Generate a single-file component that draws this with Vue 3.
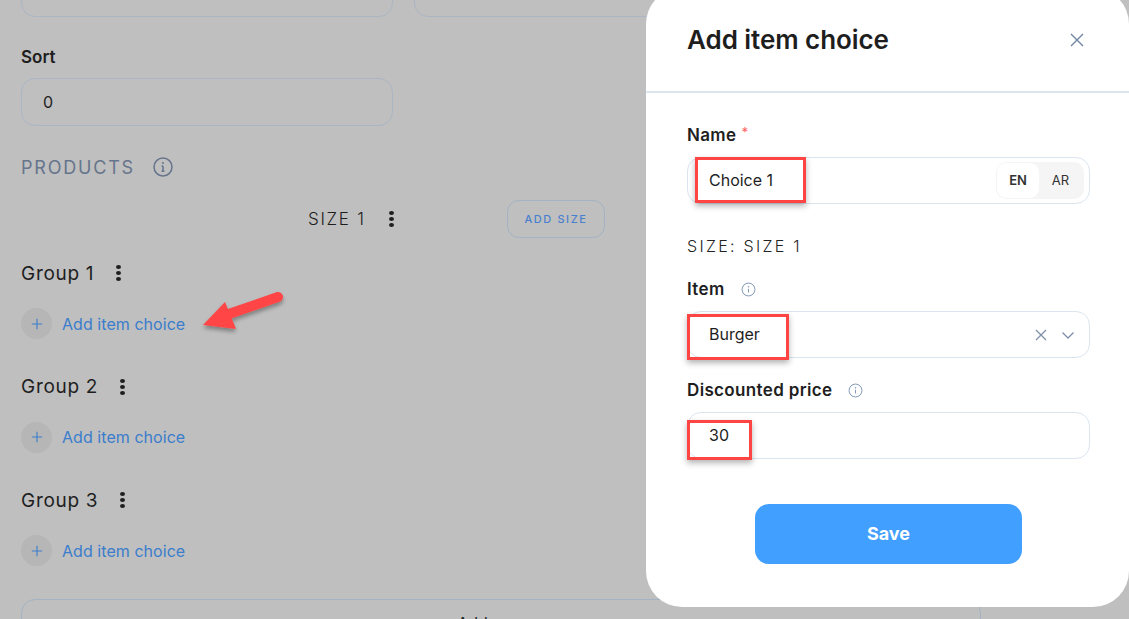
<script setup>
const groups = ['Group 1', 'Group 2', 'Group 3']
</script>

<template>
  <div class="page">
    <main class="content">
      <div class="top-row">
        <div class="field-box"></div>
        <div class="field-box"></div>
      </div>
      <div class="sort-label">Sort</div>
      <div class="field-box sort-input">0</div>
      <div class="products">
        <span>PRODUCTS</span>
        <svg class="info-lg" viewBox="0 0 20 20"><circle cx="10" cy="10" r="9" /><path d="M10 9v5.2M8.6 9h1.4M8.6 14.2h2.8" /><circle class="dot" cx="10" cy="6" r="1" /></svg>
      </div>
      <div class="size-row">
        <span class="size-name">SIZE 1</span>
        <span class="kebab"><i></i><i></i><i></i></span>
        <button class="add-size">ADD SIZE</button>
      </div>
      <section v-for="g in groups" :key="g" class="group">
        <div class="group-title">
          <span>{{ g }}</span>
          <span class="kebab"><i></i><i></i><i></i></span>
        </div>
        <div class="add-choice">
          <span class="plus"><svg viewBox="0 0 14 14"><path d="M7 1v12M1 7h12" /></svg></span>
          <span>Add item choice</span>
        </div>
      </section>
      <div class="add-group">Add group</div>
    </main>

    <aside class="modal">
      <header class="modal-head">
        <h2>Add item choice</h2>
        <svg class="close" viewBox="0 0 14 14"><path d="M1 1l12 12M13 1L1 13" /></svg>
      </header>
      <div class="modal-body">
        <label class="lbl">Name <em>*</em></label>
        <div class="input name-input">
          <span>Choice 1</span>
          <div class="lang"><b>EN</b><span>AR</span></div>
        </div>
        <div class="size-line">SIZE: SIZE 1</div>
        <label class="lbl item-lbl">Item
          <svg class="info" viewBox="0 0 20 20"><circle cx="10" cy="10" r="8.6" /><path d="M10 9v5" /><circle class="dot" cx="10" cy="6.2" r="1" /></svg>
        </label>
        <div class="input">
          <span>Burger</span>
          <div class="sel-icons">
            <svg viewBox="0 0 14 14"><path d="M2 2l10 10M12 2L2 12" /></svg>
            <svg viewBox="0 0 14 14"><path d="M1.5 4.5L7 10l5.5-5.5" /></svg>
          </div>
        </div>
        <label class="lbl price-lbl">Discounted price
          <svg class="info" viewBox="0 0 20 20"><circle cx="10" cy="10" r="8.6" /><path d="M10 9v5" /><circle class="dot" cx="10" cy="6.2" r="1" /></svg>
        </label>
        <div class="input"><span>30</span></div>
        <button class="save">Save</button>
      </div>
    </aside>

    <div class="mark mark-name"></div>
    <div class="mark mark-item"></div>
    <div class="mark mark-price"></div>
    <svg class="arrow" viewBox="0 0 100 50">
      <defs>
        <filter id="arrow-shadow" x="-20%" y="-20%" width="140%" height="160%">
          <feDropShadow dx="0" dy="3" stdDeviation="2" flood-color="#000" flood-opacity="0.35" />
        </filter>
      </defs>
      <g filter="url(#arrow-shadow)">
        <path d="M83 7L28 26" stroke="#ff4444" stroke-width="10" stroke-linecap="round" fill="none" />
        <path d="M8 35L30 12L41 39Z" fill="#ff4444" />
      </g>
    </svg>
  </div>
</template>

<style>
html, body { margin: 0; background: #bfbfbf; }
</style>

<style scoped>
.page {
  position: relative;
  width: 1129px;
  height: 619px;
  overflow: hidden;
  background: #bfbfbf;
  font-family: Inter, "Liberation Sans", sans-serif;
  color: #1e1e1e;
}
.content { padding-left: 21px; width: 960px; }
.top-row { display: flex; gap: 21px; margin-top: -30px; }
.field-box {
  box-sizing: border-box;
  width: 372px;
  height: 47px;
  border: 1px solid #aab6c4;
  border-radius: 14px;
  display: flex;
  align-items: center;
  padding-left: 21px;
  font-size: 16px;
}
.sort-label { margin-top: 29px; font-size: 17px; font-weight: 600; line-height: 22px; }
.sort-input { margin-top: 10px; height: 48px; }
.products {
  display: flex;
  align-items: center;
  gap: 18px;
  margin-top: 29px;
  height: 24px;
  font-size: 18px;
  letter-spacing: 1.8px;
  color: #66758c;
}
.info-lg { width: 20px; height: 20px; fill: none; stroke: #66758c; stroke-width: 1.5; }
.dot { fill: currentColor; stroke: none; }
.info-lg .dot { fill: #66758c; }
.size-row {
  display: flex;
  align-items: center;
  height: 38px;
  margin-top: 21px;
  padding-left: 287px;
}
.size-name { width: 58px; font-size: 17px; font-weight: 300; letter-spacing: 1.7px; white-space: nowrap; }
.size-row .kebab { margin-left: 23px; }
.add-size {
  box-sizing: border-box;
  margin-left: 113px;
  width: 98px;
  height: 38px;
  background: transparent;
  border: 1px solid #a3b2c4;
  border-radius: 12px;
  color: #4a7fce;
  font: 500 11px Inter, sans-serif;
  letter-spacing: 1.6px;
  padding: 0;
}
.kebab { display: inline-flex; flex-direction: column; gap: 2px; width: 5px; }
.kebab i { width: 5px; height: 4px; border-radius: 50%; background: #1e1e1e; }
.group { height: 113.5px; }
.group:first-of-type { margin-top: 22px; }
.group-title {
  display: flex;
  align-items: center;
  gap: 22px;
  height: 26px;
  font-size: 19px;
  letter-spacing: 0.7px;
}
.add-choice {
  display: flex;
  align-items: center;
  gap: 10px;
  margin-top: 22px;
  height: 31px;
  font-size: 16px;
  letter-spacing: 0.05px;
  color: #3a7dcc;
}
.plus {
  width: 31px;
  height: 31px;
  border-radius: 50%;
  background: #b6b6b6;
  display: flex;
  align-items: center;
  justify-content: center;
}
.plus svg { width: 12px; height: 12px; fill: none; stroke: #3a7dcc; stroke-width: 1.3; }
.add-group {
  box-sizing: border-box;
  height: 60px;
  margin-top: -2px;
  border: 1px solid #a3b2c4;
  border-radius: 14px;
  text-align: center;
  padding-top: 13px;
  padding-right: 8px;
  font-size: 16px;
}
.modal {
  position: absolute;
  left: 646px;
  top: -12px;
  width: 483px;
  height: 619px;
  background: #fff;
  border-radius: 36px;
}
.modal-head {
  box-sizing: border-box;
  height: 105px;
  padding: 33px 45px 0 41px;
  border-bottom: 2px solid #dce6ef;
  display: flex;
  justify-content: space-between;
}
.modal-head h2 { margin: 0; font-size: 26px; font-weight: 600; line-height: 38px; letter-spacing: -0.06px; color: #1e1e1e; }
.close { width: 14px; height: 14px; margin-top: 12px; fill: none; stroke: #6f84a3; stroke-width: 1.4; }
.modal-body { padding: 0 39px 0 41px; display: flex; flex-direction: column; }
.lbl {
  display: flex;
  align-items: center;
  height: 22px;
  margin-top: 31px;
  font-size: 17px;
  font-weight: 600;
  letter-spacing: 0.35px;
  color: #1e1e1e;
  gap: 5px;
}
.lbl em { font-style: normal; font-size: 13px; color: #ff6b6b; font-weight: 500; margin-top: -6px; }
.input {
  box-sizing: border-box;
  height: 47px;
  margin-top: 11px;
  border: 1px solid #dbe5ef;
  border-radius: 14px;
  padding: 0 5px 0 21px;
  display: flex;
  align-items: center;
  justify-content: space-between;
  font-size: 16px;
}
.input > span { margin-top: -2px; }
.name-input { margin-top: 11px; }
.lang {
  display: flex;
  align-items: center;
  width: 88px;
  height: 37px;
  background: #f5f5f5;
  border-radius: 10px;
  font-size: 13px;
  color: #333;
}
.lang b { width: 42px; height: 35px; margin-left: 1px; background: #fff; border-radius: 9px; display: flex; align-items: center; justify-content: center; font-weight: 600; padding-bottom: 1px; box-sizing: border-box; }
.lang span { flex: 1; text-align: center; margin-top: -1px; padding-right: 2px; }
.size-line { margin-top: 32px; height: 20px; line-height: 20px; font-size: 16px; font-weight: 300; letter-spacing: 2.3px; color: #222; }
.item-lbl { margin-top: 22px; gap: 16px; }
.price-lbl { margin-top: 21px; gap: 16px; }
.info { width: 15px; height: 15px; fill: none; stroke: #8096b5; stroke-width: 1.3; color: #8096b5; }
.sel-icons { display: flex; gap: 13px; margin-right: 9px; }
.sel-icons svg { width: 14px; height: 14px; fill: none; stroke: #7f90aa; stroke-width: 1.3; }
.save {
  align-self: center;
  width: 267px;
  height: 60px;
  margin-top: 45px;
  padding-bottom: 2px;
  border: 0;
  border-radius: 14px;
  background: #419fff;
  color: #fff;
  font: 700 18px Inter, sans-serif;
}
.mark {
  position: absolute;
  box-sizing: border-box;
  border: 3px solid #ff4444;
  box-shadow: 0 3px 6px rgba(0, 0, 0, 0.3);
}
.mark-name { left: 695px; top: 157px; width: 111px; height: 46px; }
.mark-item { left: 687px; top: 314px; width: 102px; height: 46px; }
.mark-price { left: 687px; top: 420px; width: 65px; height: 40px; }
.arrow { position: absolute; left: 195px; top: 290px; width: 100px; height: 50px; }
</style>
